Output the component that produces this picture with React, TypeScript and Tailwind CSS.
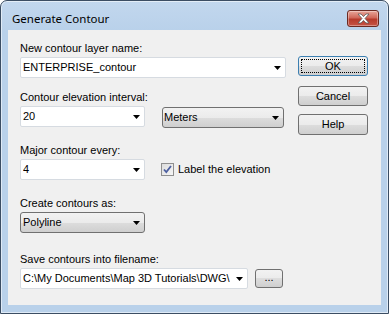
const sans = "font-['Liberation_Sans',Arial,sans-serif] text-[11px] text-black";

function Arrow() {
  return (
    <svg width="7" height="4" viewBox="0 0 7 4" className="shrink-0">
      <path d="M0 0h7L3.5 4z" fill="#000" />
    </svg>
  );
}

function Combo({ value, className }: { value: string; className: string }) {
  return (
    <div className={`flex h-[21px] items-center rounded-[2px] border border-[#d6dbe1] bg-white pl-[2px] pr-[4px] ${className}`}>
      <span className="mr-[6px] flex-1 overflow-hidden whitespace-nowrap leading-[13px]">{value}</span>
      <Arrow />
    </div>
  );
}

function DropList({ value, className }: { value: string; className: string }) {
  return (
    <div className={`flex h-[21px] items-center rounded-[3px] border border-[#707070] bg-[linear-gradient(#f2f2f2,#ebebeb_50%,#dddddd_50%,#cfcfcf)] pr-[4px] ${className}`}>
      <span className="flex-1 overflow-hidden whitespace-nowrap leading-[13px]">{value}</span>
      <Arrow />
    </div>
  );
}

function Button({ label, className = '' }: { label: string; className?: string }) {
  return (
    <div className={`flex items-center justify-center rounded-[3px] border border-[#707070] bg-[linear-gradient(#f2f2f2,#ebebeb_50%,#dddddd_50%,#cfcfcf)] leading-[13px] ${className}`}>
      {label}
    </div>
  );
}

function Label({ text, className = '' }: { text: string; className?: string }) {
  return <div className={`h-[13px] leading-[13px] ${className}`}>{text}</div>;
}

export default function App() {
  return (
    <div className="h-[314px] w-[389px] overflow-hidden bg-white">
      <div className="flex h-full w-full flex-col rounded-t-[7px] border border-[#3b4d63] bg-[linear-gradient(#c2d7ee,#b9d1ea_30px,#b9d1ea)] shadow-[inset_0_0_0_1px_rgba(255,255,255,0.55)]">
        {/* title bar */}
        <div className="flex h-[29px] shrink-0 items-start">
          <div className="ml-[11px] mt-[10px] font-['Noto_Sans','Open_Sans',sans-serif] text-[11.5px] leading-[16px] text-black">
            Generate Contour
          </div>
          <div className="ml-auto mr-[9px] mt-[9px] flex h-[17px] w-[32px] items-center justify-center rounded-[3px] border border-[#6b2a22] bg-[linear-gradient(#e8a69a,#d0685a_45%,#b63a2b_55%,#c65445)] shadow-[inset_0_0_0_1px_rgba(255,255,255,0.35)]">
            <svg width="13" height="11" viewBox="0 0 13 11">
              <path
                d="M1 1h3l2.5 2.6L9 1h3L8 5.5 12 10H9L6.5 7.4 4 10H1l4-4.5z"
                fill="#fff"
                stroke="#5a5a5a"
                strokeWidth="0.8"
                strokeLinejoin="round"
              />
            </svg>
          </div>
        </div>

        {/* client area */}
        <div className={`mx-[7px] flex h-[275px] shrink-0 bg-[#f0f0f0] pl-[12px] pt-[12px] ${sans}`}>
          <div className="flex w-[266px] flex-col">
            <Label text="New contour layer name:" />
            <Combo value="ENTERPRISE_contour" className="mt-[2px] w-[266px]" />

            <Label text="Contour elevation interval:" className="mt-[13px]" />
            <div className="mt-[2px] flex items-start">
              <Combo value="20" className="w-[125px]" />
              <DropList value="Meters" className="ml-[17px] mt-px w-[122px] pl-px" />
            </div>

            <Label text="Major contour every:" className="mt-[16px]" />
            <div className="mt-[2px] flex items-center">
              <Combo value="4" className="w-[125px]" />
              <div className="ml-[16px] flex h-[13px] w-[13px] items-center justify-center border border-[#8f8f8f] bg-[linear-gradient(135deg,#dcdcdc,#f6f6f6)]">
                <svg width="9" height="9" viewBox="0 0 9 9">
                  <path d="M1 4.5l2.3 2.6L8 1" fill="none" stroke="#4c5fa0" strokeWidth="1.8" />
                </svg>
              </div>
              <span className="ml-[4px] leading-[13px]">Label the elevation</span>
            </div>

            <Label text="Create contours as:" className="mt-[17px]" />
            <DropList value="Polyline" className="mt-[2px] w-[125px] pl-[2px]" />

            <Label text="Save contours into filename:" className="mt-[20px]" />
            <div className="mt-[2px] flex items-center">
              <Combo value="C:\My Documents\Map 3D Tutorials\DWG\" className="w-[228px]" />
              <Button label="..." className="ml-[7px] h-[19px] w-[28px] pb-[3px]" />
            </div>
          </div>

          <div className="ml-[12px] flex w-[70px] flex-col pt-[14px]">
            <div className="relative flex h-[20px] items-center justify-center rounded-[3px] border border-[#3c7fb1] bg-[linear-gradient(#f2f2f2,#ebebeb_50%,#dddddd_50%,#cfcfcf)] leading-[13px]">
              <div className="absolute inset-[2px] border border-dotted border-black" />
              OK
            </div>
            <Button label="Cancel" className="mt-[10px] h-[20px]" />
            <Button label="Help" className="mt-[8px] h-[21px]" />
          </div>
        </div>
      </div>
    </div>
  );
}
